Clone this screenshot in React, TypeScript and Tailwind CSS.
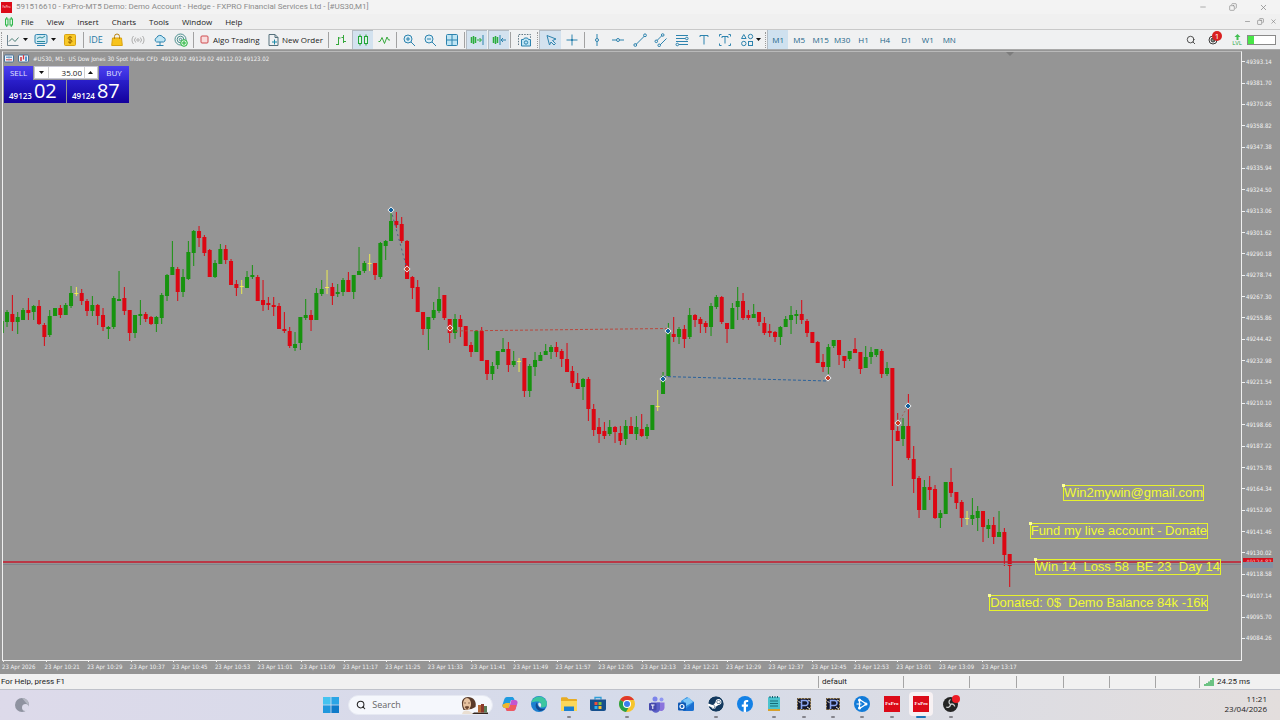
import type { ReactNode } from "react";
import clsx from "clsx";
import { Copy, Minus, Search, X } from "lucide-react";
import { FaFacebookF, FaSteam } from "react-icons/fa";

type Kind = "g" | "r" | "y";
// kind, high, body top, body bottom, low
type Candle = [Kind, number, number, number, number];

const CANDLES: Candle[] = [
  ["g", 321, 321, 333, 333], ["g", 310, 312, 322, 327], ["r", 295, 314, 322, 331], ["g", 312, 317, 322, 334],
  ["g", 308, 310, 320, 320], ["r", 298, 310, 313, 320], ["g", 305, 306, 312, 320], ["r", 300, 306, 324, 325],
  ["r", 323, 325, 337, 346], ["g", 310, 316, 335, 337], ["g", 308, 308, 316, 316], ["r", 305, 308, 315, 318],
  ["g", 303, 305, 315, 315], ["g", 286, 293, 306, 308], ["y", 287, 293, 294, 296], ["r", 289, 293, 301, 305],
  ["r", 299, 301, 311, 316], ["g", 296, 305, 311, 316], ["r", 304, 305, 316, 325], ["r", 308, 315, 327, 331],
  ["g", 326, 327, 329, 339], ["g", 296, 298, 327, 329], ["g", 271, 299, 301, 301], ["r", 287, 298, 311, 315],
  ["r", 310, 310, 333, 341], ["g", 315, 315, 333, 338], ["g", 300, 314, 316, 325], ["r", 312, 314, 319, 322],
  ["r", 316, 317, 324, 325], ["g", 316, 317, 324, 332], ["g", 293, 295, 318, 324], ["g", 274, 275, 296, 301],
  ["g", 241, 267, 275, 275], ["r", 267, 269, 292, 301], ["g", 269, 277, 292, 297], ["g", 241, 252, 279, 280],
  ["g", 230, 231, 253, 266], ["r", 226, 231, 238, 247], ["r", 235, 237, 253, 256], ["r", 249, 250, 277, 277],
  ["g", 260, 263, 277, 278], ["g", 244, 249, 264, 264], ["r", 245, 249, 260, 264], ["r", 259, 261, 285, 285],
  ["r", 280, 284, 288, 296], ["y", 280, 286, 287, 294], ["g", 271, 277, 288, 288], ["g", 265, 275, 277, 279],
  ["r", 275, 277, 301, 301], ["r", 280, 300, 305, 311], ["r", 297, 303, 305, 310], ["r", 297, 305, 307, 316],
  ["r", 303, 306, 329, 329], ["r", 312, 329, 331, 333], ["r", 327, 331, 346, 348], ["g", 332, 344, 348, 351],
  ["g", 317, 317, 343, 350], ["g", 299, 315, 318, 320], ["r", 310, 315, 320, 331], ["g", 288, 293, 320, 320],
  ["g", 280, 289, 294, 296], ["y", 270, 287, 288, 294], ["r", 283, 287, 296, 305], ["g", 284, 292, 294, 297],
  ["g", 278, 280, 292, 296], ["r", 272, 280, 292, 292], ["g", 275, 275, 292, 299], ["g", 247, 271, 275, 275],
  ["g", 261, 263, 271, 273], ["y", 254, 263, 264, 271], ["r", 263, 263, 275, 280], ["g", 242, 243, 277, 279],
  ["g", 240, 241, 246, 260], ["g", 210, 221, 241, 241], ["r", 212, 221, 225, 228], ["r", 217, 224, 241, 243],
  ["r", 240, 241, 279, 279], ["r", 276, 277, 288, 299], ["r", 280, 287, 312, 312], ["r", 312, 312, 329, 335],
  ["g", 317, 317, 329, 350], ["g", 302, 310, 318, 320], ["g", 287, 299, 311, 313], ["r", 295, 295, 318, 320],
  ["r", 319, 319, 333, 343], ["g", 314, 319, 333, 339], ["r", 315, 319, 327, 337], ["r", 326, 326, 346, 346],
  ["r", 342, 345, 352, 357], ["g", 330, 331, 352, 352], ["r", 327, 331, 361, 361], ["r", 360, 360, 374, 380],
  ["g", 362, 366, 374, 380], ["g", 351, 351, 365, 369], ["g", 338, 349, 352, 352], ["r", 342, 349, 365, 372],
  ["g", 351, 361, 365, 367], ["y", 358, 361, 362, 372], ["r", 358, 358, 391, 397], ["g", 364, 366, 391, 397],
  ["g", 352, 360, 367, 376], ["g", 352, 355, 361, 361], ["g", 344, 351, 355, 355], ["g", 345, 347, 352, 359],
  ["r", 342, 347, 352, 357], ["r", 349, 351, 359, 367], ["r", 343, 359, 372, 372], ["r", 366, 371, 383, 387],
  ["r", 373, 383, 389, 389], ["g", 378, 379, 387, 400], ["r", 377, 379, 409, 421], ["r", 404, 409, 430, 436],
  ["r", 418, 427, 434, 443], ["r", 422, 431, 436, 439], ["g", 420, 427, 434, 436], ["r", 426, 427, 432, 443],
  ["r", 426, 433, 441, 445], ["g", 420, 426, 439, 445], ["r", 417, 426, 434, 434], ["g", 416, 427, 434, 440],
  ["r", 414, 429, 436, 437], ["g", 424, 427, 436, 439], ["g", 405, 405, 430, 430], ["y", 390, 406, 407, 411],
  ["g", 372, 376, 394, 394], ["g", 323, 332, 376, 376], ["r", 317, 334, 337, 342], ["g", 327, 329, 337, 344],
  ["r", 325, 329, 339, 348], ["g", 308, 315, 337, 339], ["r", 314, 315, 320, 327], ["r", 317, 319, 324, 333],
  ["r", 321, 323, 327, 333], ["g", 303, 306, 327, 336], ["g", 295, 297, 307, 309], ["r", 296, 297, 322, 324],
  ["r", 323, 323, 329, 343], ["g", 303, 308, 329, 329], ["g", 287, 301, 307, 320], ["r", 293, 301, 318, 320],
  ["r", 310, 315, 318, 320], ["g", 304, 314, 318, 318], ["r", 312, 312, 322, 326], ["r", 317, 323, 333, 335],
  ["r", 324, 331, 333, 337], ["r", 331, 332, 337, 342], ["g", 326, 327, 337, 345], ["g", 316, 319, 327, 327],
  ["g", 306, 315, 320, 334], ["g", 310, 314, 316, 324], ["r", 300, 314, 320, 324], ["r", 319, 321, 333, 337],
  ["r", 332, 332, 343, 343], ["r", 341, 342, 363, 363], ["r", 354, 362, 367, 372], ["g", 344, 347, 367, 374],
  ["g", 340, 340, 346, 348], ["r", 340, 340, 355, 365], ["r", 356, 356, 361, 368], ["g", 351, 351, 359, 361],
  ["r", 338, 349, 353, 353], ["r", 352, 352, 369, 374], ["g", 346, 357, 368, 368], ["g", 347, 352, 357, 364],
  ["g", 349, 349, 355, 357], ["r", 349, 351, 374, 378], ["g", 362, 368, 374, 376], ["r", 368, 368, 430, 486],
  ["r", 413, 431, 441, 441], ["g", 418, 426, 439, 446], ["r", 394, 426, 458, 460], ["r", 446, 459, 479, 493],
  ["r", 476, 478, 510, 518], ["g", 480, 487, 510, 510], ["r", 476, 487, 490, 500], ["r", 485, 489, 518, 519],
  ["g", 510, 513, 518, 528], ["g", 482, 482, 514, 514], ["r", 468, 482, 493, 497], ["r", 492, 492, 503, 509],
  ["r", 500, 502, 518, 527], ["y", 511, 518, 519, 525], ["g", 498, 515, 519, 525], ["g", 506, 511, 518, 531],
  ["r", 511, 511, 527, 542], ["g", 519, 525, 529, 538], ["r", 517, 525, 537, 544], ["g", 511, 532, 537, 537],
  ["r", 528, 532, 555, 566], ["r", 554, 554, 566, 587],
];

const STEP = 16 / 3;
const FILL = { g: "#17930f", r: "#dc0713", y: "#ecec54" };

const DEALS = [
  { x: 391, y: 210, side: "buy" },
  { x: 407, y: 269, side: "sell" },
  { x: 450, y: 328, side: "sell" },
  { x: 668, y: 331, side: "buy" },
  { x: 663, y: 379, side: "buy" },
  { x: 828, y: 378, side: "sell" },
  { x: 908, y: 406, side: "buy" },
  { x: 898, y: 423, side: "sell" },
];

const NOTES = [
  { text: "Win2mywin@gmail.com", pos: "top-[433px] right-[37px]" },
  { text: "Fund my live account - Donate", pos: "top-[471px] right-[33px]" },
  { text: "Win 14  Loss 58  BE 23  Day 14", pos: "top-[507px] right-[20px]" },
  { text: "Donated: 0$  Demo Balance 84k -16k", pos: "top-[543px] right-[33px]" },
];

const PRICES = Array.from({ length: 28 }, (_, i) => (49393.14 - i * 11.44).toFixed(2));

const TIMES = Array.from({ length: 24 }, (_, i) => {
  if (i === 0) return "23 Apr 2026";
  const m = 10 * 60 + 13 + i * 8;
  return `23 Apr ${Math.floor(m / 60)}:${String(m % 60).padStart(2, "0")}`;
});

const MENU = ["File", "View", "Insert", "Charts", "Tools", "Window", "Help"];
const FRAMES = ["M1", "M5", "M15", "M30", "H1", "H4", "D1", "W1", "MN"];

/* ---------- toolbar pieces ---------- */

function Icon({ children, color = "#2d83ae", w = 14 }: { children: ReactNode; color?: string; w?: number }) {
  return (
    <svg width={w} height={14} viewBox={`0 0 ${w} 14`} fill="none" stroke={color} strokeWidth="1" className="shrink-0">
      {children}
    </svg>
  );
}

function Tool({ label, active, children }: { label: string; active?: boolean; children: ReactNode }) {
  return (
    <button
      aria-label={label}
      className={clsx(
        "flex h-full items-center justify-center",
        active && "border-t border-l border-[#b4bcc4] bg-[#d3e2ef]"
      )}
    >
      {children}
    </button>
  );
}

function Caret() {
  return (
    <svg width="5" height="3" viewBox="0 0 5 3" className="shrink-0">
      <path d="M0 0h5L2.5 3z" fill="#111" />
    </svg>
  );
}

const Sep = () => <div className="mx-px h-4 w-px shrink-0 bg-[#a2a2a2]" />;
const Grip = () => <div className="mx-px h-4 w-px shrink-0 border-l border-dotted border-[#9a9a9a]" />;

function Toolbar() {
  return (
    <div className="flex h-5 shrink-0 items-center border-t border-[#c9c9c9] bg-[#f0f1f2]">
      <Grip />
      <button aria-label="Chart types" className="flex h-full w-[28px] items-center justify-center gap-[3px]">
        <Icon color="#6f8592">
          <path d="M1.5 2v10.500h11" />
          <path d="M3 8.500l3-3 3 3 3.500-4" stroke="#4d7f76" />
        </Icon>
        <Caret />
      </button>
      <button aria-label="Indicators" className="flex h-full w-[27px] items-center justify-center gap-[3px]">
        <Icon>
          <rect x="1" y="1.500" width="12" height="9" rx="1.500" fill="#cfe9f3" />
          <path d="M3 5.500l3-1.500 2 1 3-2M3 8.500h8" stroke="#2c8c9a" />
          <path d="M3 12.500h8" />
        </Icon>
        <Caret />
      </button>
      <div className="grid h-full w-6 items-center">
        <Tool label="Market">
          <Icon>
            <rect x="1.500" y="1.500" width="11" height="11" rx="1" fill="#f8c928" stroke="#d9a312" />
            <path d="M9 4.500c-1-1-4-.8-4 .7 0 2 4 1 4 3 0 1.500-3 1.700-4 .6M7 3v8" stroke="#a06b00" />
          </Icon>
        </Tool>
      </div>
      <Sep />
      <div className="grid h-full w-[107px] shrink-0 grid-cols-5 items-center">
        <button className="text-[9px] text-[#2878a5]">IDE</button>
        <Tool label="Store">
          <Icon>
            <path d="M2.500 5h9l.8 7.500H1.700z" fill="#f7c31c" stroke="#d9a312" />
            <path d="M4.500 6V3.500a2.500 2.500 0 0 1 5 0V6" stroke="#ba8413" />
          </Icon>
        </Tool>
        <Tool label="Signals">
          <Icon color="#adadad">
            <circle cx="7" cy="7" r="1.200" />
            <path d="M4.700 4.500a3.500 3.500 0 0 0 0 5M9.300 4.500a3.500 3.500 0 0 1 0 5M2.500 3a6 6 0 0 0 0 8M11.500 3a6 6 0 0 1 0 8" />
          </Icon>
        </Tool>
        <Tool label="Cloud">
          <Icon>
            <path d="M3.500 9A2.300 2.300 0 0 1 3.700 4.700 3.400 3.400 0 0 1 10 4.300 2.400 2.400 0 0 1 10.500 9z" fill="#bfe5f4" />
            <path d="M7 9v3M3.500 12.500h7" />
          </Icon>
        </Tool>
        <Tool label="VPS">
          <Icon color="#4b8f8f">
            <circle cx="6.500" cy="6.500" r="5.500" />
            <circle cx="6.500" cy="6.500" r="3.300" />
            <circle cx="6.500" cy="6.500" r="1.200" />
            <circle cx="10" cy="10" r="3.300" fill="#dff7df" stroke="#25b33c" />
            <path d="M10 8v4M8 10h4" stroke="#25b33c" />
          </Icon>
        </Tool>
      </div>
      <Sep />
      <button className="flex h-full w-[70px] shrink-0 items-center gap-1 pl-[5px] text-[8px] whitespace-nowrap text-[#1c1c1c]">
        <svg width="9" height="9" viewBox="0 0 9 9" className="shrink-0">
          <rect x="1" y="1" width="7" height="7" rx="1" fill="#f8dcdc" stroke="#cf4a4e" />
        </svg>
        Algo Trading
      </button>
      <button className="flex h-full w-[62px] shrink-0 items-center gap-[3px] pl-[3px] text-[8px] whitespace-nowrap text-[#1c1c1c]">
        <Icon w={11}>
          <path d="M1 1.500h6l3 3v8H1zM7 1.500v3h3" stroke="#55707c" />
          <path d="M6.500 6.500v5M4 9h5" stroke="#1c8aa8" />
        </Icon>
        New Order
      </button>
      <Sep />
      <div className="grid h-full w-[65px] shrink-0 grid-cols-3 items-center">
        <Tool label="Bar chart">
          <Icon color="#35a83b">
            <path d="M4.500 4v8M2 11.500h2.500M4.500 5h2M9.500 2v8M7.500 4.500h2M9.500 8.500h2.500" />
          </Icon>
        </Tool>
        <Tool label="Candlesticks" active>
          <Icon color="#22a53a">
            <rect x="2.500" y="3.500" width="3" height="7" fill="#ddf3e4" />
            <rect x="8.500" y="3.500" width="3" height="7" fill="#ddf3e4" />
            <path d="M4 1.500v2M4 10.500v2M10 1.500v2M10 10.500v2" />
          </Icon>
        </Tool>
        <Tool label="Line chart">
          <Icon color="#35a83b">
            <path d="M1.500 8.500h1.500l2-4 2.500 6 2.500-6.500 1.500 3h1.500" />
          </Icon>
        </Tool>
      </div>
      <Sep />
      <div className="grid h-full w-[65px] shrink-0 grid-cols-3 items-center">
        <Tool label="Zoom in">
          <Icon>
            <circle cx="6" cy="6" r="4" fill="#d9edf6" />
            <path d="M9 9l4 4M4 6h4M6 4v4" />
          </Icon>
        </Tool>
        <Tool label="Zoom out">
          <Icon>
            <circle cx="6" cy="6" r="4" fill="#d9edf6" />
            <path d="M9 9l4 4M4 6h4" />
          </Icon>
        </Tool>
        <Tool label="Tile windows">
          <Icon>
            <rect x="1.500" y="1.500" width="11" height="11" rx="1" fill="#bfe5f4" />
            <path d="M7 1.500v11M1.500 7h11" />
          </Icon>
        </Tool>
      </div>
      <Sep />
      <div className="grid h-full w-[43px] shrink-0 grid-cols-2 items-center gap-px">
        <Tool label="Auto scroll" active>
          <Icon color="#29ad3b">
            <path d="M1.500 4v6M3.500 3v8M5.500 4v6" strokeWidth="1.500" />
            <path d="M7 7h4M9.500 5l2 2-2 2" />
            <path d="M13 2v10" stroke="#2d83ae" />
          </Icon>
        </Tool>
        <Tool label="Chart shift" active>
          <Icon color="#29ad3b">
            <path d="M1.500 4v6M3.500 3v8M5.500 4v6" strokeWidth="1.500" />
            <path d="M8 2v10M9 7h5M11 5L9 7l2 2" stroke="#2d83ae" />
          </Icon>
        </Tool>
      </div>
      <Sep />
      <div className="grid h-full w-6 shrink-0 items-center">
        <Tool label="Screenshot">
          <Icon w={15}>
            <path d="M1.500 12V1.500h12V5" strokeDasharray="1.500 1.200" stroke="#5f7784" />
            <path d="M4.500 6.500h2l1-1.500h3l1 1.500h2v6.500h-9z" fill="#bfe5f4" />
            <circle cx="9" cy="9.500" r="1.700" />
          </Icon>
        </Tool>
      </div>
      <Grip />
      <div className="grid h-full w-11 shrink-0 grid-cols-2 items-center">
        <Tool label="Cursor" active>
          <Icon>
            <path d="M3 2.500l9 3.500-3.500 1.500 3 3-1.500 1.500-3-3L5.500 12z" />
          </Icon>
        </Tool>
        <Tool label="Crosshair">
          <Icon>
            <path d="M7 1.500v4.500M7 8v4.500M1.500 7H6M8 7h4.500" />
            <rect x="6.500" y="6.500" width="1" height="1" />
          </Icon>
        </Tool>
      </div>
      <Sep />
      <div className="grid h-full w-[150px] shrink-0 grid-cols-7 items-center">
        <Tool label="Vertical line">
          <Icon>
            <path d="M7 1v4.500M7 8.500V13" />
            <circle cx="7" cy="7" r="1.500" />
          </Icon>
        </Tool>
        <Tool label="Horizontal line">
          <Icon>
            <path d="M1 7h4.500M8.500 7H13" />
            <circle cx="7" cy="7" r="1.500" />
          </Icon>
        </Tool>
        <Tool label="Trend line">
          <Icon>
            <path d="M3 11.500L11.500 3" />
            <circle cx="2.300" cy="12" r="1.400" />
            <circle cx="12" cy="2.300" r="1.400" />
          </Icon>
        </Tool>
        <Tool label="Channel">
          <Icon>
            <path d="M3 7.500L8 2.500M6 12l6.500-6.500" />
            <circle cx="2.300" cy="8.300" r="1.300" />
            <circle cx="8.700" cy="2" r="1.300" />
            <circle cx="5.200" cy="12.300" r="1.300" />
          </Icon>
        </Tool>
        <Tool label="Fibonacci">
          <Icon>
            <path d="M1 2.500h12M1 5.500h9M1 8.500h12M4 11.500h9" />
            <circle cx="11.800" cy="5.500" r="1.300" />
            <circle cx="2.300" cy="11.500" r="1.300" />
          </Icon>
        </Tool>
        <Tool label="Text">
          <Icon>
            <path d="M3 4V2.500h8V4M7 2.500v9" />
          </Icon>
        </Tool>
        <Tool label="Label">
          <Icon>
            <path d="M1.500 3.500v-2h2M10.500 1.500h2v2M12.500 10.500v2h-2M3.500 12.500h-2v-2M4 5V3.500h6V5M7 3.500v7" />
          </Icon>
        </Tool>
      </div>
      <button aria-label="Objects" className="flex h-full w-[28px] shrink-0 items-center justify-center gap-[2px]">
        <Icon>
          <path d="M1.500 5.500l2.300-4 2.300 4z" />
          <circle cx="10.500" cy="3.500" r="2.200" />
          <circle cx="3.800" cy="10.500" r="2.200" />
          <rect x="8.500" y="8.500" width="4" height="4" />
        </Icon>
        <Caret />
      </button>
      <Grip />
      <div className="grid h-full w-[193px] shrink-0 grid-cols-9 items-center text-[8px] text-[#236689]">
        {FRAMES.map((f) => (
          <button key={f} className={clsx("h-full", f === "M1" && "border-l border-[#b4bcc4] bg-[#cfe1ef]")}>
            {f}
          </button>
        ))}
      </div>

      <div className="ml-auto flex items-center gap-3 pr-1">
        <button aria-label="Search">
          <Search size={10} color="#333" />
        </button>
        <button aria-label="Notifications" className="relative">
          <svg width="11" height="11" viewBox="0 0 11 11" fill="none" stroke="#3b3b3b">
            <circle cx="5" cy="6" r="4" />
            <path d="M5 4a2 2 0 1 0 2 2L5 6z" fill="#8d9a8d" />
          </svg>
          <span className="absolute -top-[3px] left-1 h-[10px] w-[10px] rounded-full bg-[#d91f1f] text-center text-[8px] leading-[10px] text-white">1</span>
        </button>
        <div className="flex items-center gap-[5px] pl-px">
          <div className="flex flex-col items-center">
            <svg width="7" height="6" viewBox="0 0 7 6">
              <path d="M3.500 0L6.500 3H4.500v3h-2V3H.5z" fill="#43bf52" />
            </svg>
            <span className="text-[6px] leading-[6px] text-[#23a83a]">LVL</span>
          </div>
          <div className="flex h-[10px] w-[29px] border border-[#8a8a8a] bg-white">
            <div className="w-[6px] bg-[#48e648]" />
          </div>
        </div>
      </div>
    </div>
  );
}

/* ---------- chart ---------- */

function Candles() {
  return (
    <svg viewBox="3 52 1238 608" preserveAspectRatio="xMaxYMin slice" className="block h-[608px] w-full">
      <path d="M1006 52h8l-4 4z" fill="#7c7c7c" />
      {CANDLES.map(([kind, high, top, bottom, low], i) => {
        const x = 1.7 + i * STEP;
        return (
          <g key={i} fill={FILL[kind]}>
            <rect x={x - 0.5} y={high} width={1} height={low - high} />
            <rect x={x - 2} y={top} width={4} height={bottom - top} />
          </g>
        );
      })}
      <g fill="none" strokeWidth="1">
        <path d="M450 331L668 328.500" stroke="#b9483e" strokeDasharray="3 2" />
        <path d="M663 376.500L828 381" stroke="#2b629b" strokeDasharray="3 2" />
        <path d="M391 210L407 269" stroke="#4a5f82" strokeDasharray="2 3" />
        <path d="M898 423L908 406" stroke="#a2615c" strokeDasharray="2 2" />
      </g>
      <path d="M3 564.500h1238" stroke="#80858c" />
      <path d="M3 562h1238" stroke="#c61a2c" strokeWidth="1.300" />
      {DEALS.map((d) => (
        <g key={`${d.x}-${d.y}`}>
          <path d={`M${d.x - 3.5} ${d.y}l3.500-3.500 3.500 3.500-3.500 3.500z`} fill="#e9edf0" />
          <path
            d={`M${d.x - 2} ${d.y}h4M${d.x} ${d.y - 2}v4`}
            stroke={d.side === "buy" ? "#12629c" : "#cf3b26"}
            strokeWidth="2"
          />
        </g>
      ))}
    </svg>
  );
}

function Quote({ pips, big, label }: { pips: string; big: string; label: string }) {
  return (
    <button
      aria-label={label}
      className="flex h-[23px] flex-1 items-end gap-[2px] bg-linear-to-b from-[#2a1fcb] to-[#14009c] pb-[2px] pl-[5px] text-white"
    >
      <span className="text-[8px] leading-[10px] font-semibold">{pips}</span>
      <span className="text-[20px] leading-[20px]">{big}</span>
    </button>
  );
}

function TradePanel() {
  return (
    <div className="w-[125px] font-['Open_Sans','Noto_Sans',sans-serif]">
      <div className="flex h-[14px] text-[8px]">
        <button className="w-[29px] bg-linear-to-b from-[#4c3ff0] to-[#3327d6] text-[#e3e3ff]">SELL</button>
        <div className="mx-px flex h-[13px] flex-1 border border-[#c7c7d2] bg-white">
          <button aria-label="Decrease volume" className="flex w-[14px] items-center justify-center border-r border-[#cfcfcf]">
            <Caret />
          </button>
          <input
            aria-label="Volume"
            defaultValue="35.00"
            className="w-0 flex-1 bg-white pr-[2px] text-right text-[8px] leading-[11px] text-[#222]"
          />
          <button aria-label="Increase volume" className="flex w-[13px] rotate-180 items-center justify-center border-r border-[#cfcfcf]">
            <Caret />
          </button>
        </div>
        <button className="w-[30px] bg-linear-to-b from-[#4c3ff0] to-[#3327d6] text-[#e3e3ff]">BUY</button>
      </div>
      <div className="flex gap-px">
        <Quote label="Sell by market" pips="49123" big="02" />
        <Quote label="Buy by market" pips="49124" big="87" />
      </div>
    </div>
  );
}

function Chart() {
  return (
    <div className="flex-1 bg-[#959595] pt-px pl-[2px] font-['DejaVu_Sans_Condensed','Noto_Sans',sans-serif] text-[6px] text-[#f2f2f2]">
      <div className="flex">
        <div className="relative flex-1 overflow-hidden border border-t-[#b9b9b9] border-r-[#f0f0f0] border-b-[#f0f0f0] border-l-[#f0f0f0]">
          <Candles />
          <div className="absolute top-[2px] left-px flex flex-col gap-[3px]">
            <div className="flex h-[9px] items-center gap-1 whitespace-pre">
              <svg width="25" height="9" viewBox="0 0 25 9">
                <rect x="0.500" y="1" width="9" height="7" rx="1" fill="#f1f4f8" stroke="#4b7396" />
                <path d="M2 3.200h6" stroke="#2f7fc0" />
                <path d="M2 5.800h6" stroke="#d03a42" />
                <path d="M5 1v7" stroke="#8fa3b4" strokeWidth=".6" />
                <rect x="14.500" y="1" width="10" height="7" rx="1" fill="#f1f4f8" stroke="#4b7396" />
                <path d="M17 3v4" stroke="#d03a42" strokeWidth="1.600" />
                <path d="M19.500 1v4.500" stroke="#d03a42" strokeWidth="1.300" />
                <path d="M22 2.500V7" stroke="#2f7fc0" strokeWidth="1.600" />
              </svg>
              <span>#US30, M1:  US Dow Jones 30 Spot Index CFD  49129.02 49129.02 49112.02 49123.02</span>
            </div>
            <TradePanel />
          </div>
          {NOTES.map((n) => (
            <div
              key={n.text}
              className={clsx(
                "absolute border border-[#e6f22c] font-['Liberation_Sans',Arial,sans-serif] text-[13px] leading-[14px] whitespace-pre text-[#f0fb33]",
                n.pos
              )}
            >
              <span className="absolute -top-[2px] -left-[2px] h-[3px] w-[3px] bg-[#fbff9a]" />
              {n.text}
            </div>
          ))}
        </div>
        <div className="relative flex h-[598px] w-[38px] shrink-0 flex-col">
          {PRICES.map((p) => (
            <div key={p} className="flex flex-1 items-center gap-px leading-[8px]">
              <span className="h-px w-[3px] bg-[#f0f0f0]" />
              {p}
            </div>
          ))}
          <div className="absolute top-[507px] left-px h-[10px] w-[30px] bg-[#d30f1c] pl-[3px] leading-[8px] text-[#f7b9bb]">
            49124.87
            <div className="absolute bottom-0 left-0 h-[6px] w-full bg-[#8391a3]" />
          </div>
        </div>
      </div>
      <div className="grid grid-cols-29 pr-[43px]">
        {TIMES.map((t) => (
          <div key={t} className="border-l border-transparent leading-[9px] whitespace-nowrap">
            <div className="h-px w-px bg-[#f0f0f0]" />
            <span className="-ml-px">{t}</span>
          </div>
        ))}
      </div>
    </div>
  );
}

/* ---------- taskbar ---------- */

function Svg({ children }: { children: ReactNode }) {
  return (
    <svg width="18" height="18" viewBox="0 0 18 18" fill="none">
      {children}
    </svg>
  );
}

const FxPro = () => (
  <span className="flex h-4 w-4 items-center justify-center bg-[#dc0a18] font-['Liberation_Serif',serif] text-[5px] font-bold text-white">FxPro</span>
);

const Terminal = () => (
  <Svg>
    <rect x="2" y="3" width="14" height="12" fill="#14172b" />
    <rect x="2.500" y="3.500" width="13" height="11" stroke="#b89e6a" strokeDasharray="2 1" />
    <path d="M6.500 14V5.500h4a2.500 2.500 0 0 1 0 5h-4" stroke="#8aa4ee" strokeWidth="1.600" />
    <path d="M3.500 6l2 2M12 12l3 2M13 5l2 1" stroke="#e8e4da" />
  </Svg>
);

const APPS: { name: string; icon: ReactNode; open?: boolean; active?: boolean }[] = [
  {
    name: "Copilot",
    icon: (
      <Svg>
        <path d="M6 2h5c1 0 1.600.6 2 1.600L13.500 5H10L7.500 13H4c-2 0-3-1.500-2.400-3.500l1.600-5C3.700 3 4.500 2 6 2z" fill="#1f9be0" />
        <path d="M1.600 9.500C1.100 11.500 2 13 4 13h3.500L9 8H5z" fill="#f0b62c" />
        <path d="M12 16H7c-1 0-1.600-.6-2-1.600L4.500 13H8l2.500-8H14c2 0 3 1.500 2.400 3.500l-1.600 5C14.300 15 13.500 16 12 16z" fill="#c455cf" />
        <path d="M12 16H7c-1 0-1.600-.6-2-1.600L4.500 13H8l1-3h6.500l-.7 3.500C14.300 15 13.500 16 12 16z" fill="#ef5a5e" />
      </Svg>
    ),
  },
  {
    name: "Edge",
    icon: (
      <Svg>
        <circle cx="9" cy="9" r="8" fill="#1b7fd0" />
        <path d="M1.200 8A8 8 0 0 1 17 8.500c0 2.500-2 4-4.500 4-1.500 0-2-.7-1.500-1.500.8-1.700 0-4.500-3.500-4.500C4.500 6.500 2 7 1.200 8z" fill="#3cc6a0" />
        <path d="M7 7.500c-2.500 2-1.500 7.500 3.500 8.500a8 8 0 0 0 5-2.500c-4 1.300-8-.5-8.500-6z" fill="#11488f" />
        <path d="M9 7.500c-1.500 1.500-.8 4.300 2.500 5-1-.6-.8-1-.5-1.500.6-1.200.2-3-2-3.500z" fill="#e4ebf3" />
      </Svg>
    ),
  },
  {
    name: "File Explorer",
    open: true,
    icon: (
      <Svg>
        <path d="M1 3.500c0-.8.500-1.300 1.300-1.300h4.500L8.500 4H16c.6 0 1 .4 1 1v10c0 .6-.4 1-1 1H2c-.6 0-1-.4-1-1z" fill="#e8ac23" />
        <path d="M1 6h16v9c0 .6-.4 1-1 1H2c-.6 0-1-.4-1-1z" fill="#fbd75a" />
        <path d="M4 11.500h10V16H4z" fill="#1b7fd0" />
      </Svg>
    ),
  },
  {
    name: "Store",
    icon: (
      <Svg>
        <path d="M6 4.500V2.500h6v2" stroke="#2f9ed8" strokeWidth="1.300" />
        <path d="M1 4.500h16V14a2 2 0 0 1-2 2H3a2 2 0 0 1-2-2z" fill="#17508d" />
        <path d="M5.500 7H8.500v3H5.500z" fill="#f0503a" />
        <path d="M9.500 7h3v3h-3z" fill="#7fc241" />
        <path d="M5.500 11h3v3h-3z" fill="#2eb1ee" />
        <path d="M9.500 11h3v3h-3z" fill="#f9c12d" />
      </Svg>
    ),
  },
  {
    name: "Chrome",
    open: true,
    icon: (
      <Svg>
        <circle cx="9" cy="9" r="8" fill="#f6c52c" />
        <path d="M9 9L2.100 5A8 8 0 0 1 16 5H9z" fill="#e0392d" />
        <path d="M9 9L2.100 5a8 8 0 0 0 5.900 12l3.500-6z" fill="#25a04b" />
        <circle cx="9" cy="9" r="4" fill="#fff" />
        <circle cx="9" cy="9" r="3" fill="#3b7ded" />
      </Svg>
    ),
  },
  {
    name: "Teams",
    icon: (
      <Svg>
        <circle cx="7" cy="4" r="2.500" fill="#7b83eb" />
        <circle cx="13.500" cy="4.500" r="2" fill="#8f96f2" />
        <path d="M9 7.500h7.500V13a3.500 3.500 0 0 1-6 2z" fill="#8b74dd" />
        <path d="M3 7.500h9V13a4 4 0 0 1-8.500 1z" fill="#5b5fc7" />
        <rect x="1" y="8" width="7.500" height="7.500" rx="1" fill="#4548ad" />
        <path d="M3 10h3.500M4.800 10v4" stroke="#fff" />
      </Svg>
    ),
  },
  {
    name: "Outlook",
    icon: (
      <Svg>
        <path d="M4 6l6-4 7 5v7a2 2 0 0 1-2 2H6z" fill="#2f8fe2" />
        <path d="M6 5l6-2.500L16 7l-7 4z" fill="#7cc6f8" />
        <path d="M17 7v7a2 2 0 0 1-2 2H6z" fill="#1b6fd0" />
        <rect x="1" y="7.500" width="8" height="8" rx="1" fill="#0f59b5" />
        <circle cx="5" cy="11.500" r="2" stroke="#fff" strokeWidth="1.200" />
      </Svg>
    ),
  },
  { name: "Steam", open: true, icon: <FaSteam size={16} color="#13395f" className="rounded-full bg-white" /> },
  {
    name: "Facebook",
    icon: (
      <span className="flex h-4 w-4 items-end justify-center rounded-full bg-[#1381e6]">
        <FaFacebookF size={12} color="#fff" />
      </span>
    ),
  },
  {
    name: "Notepad",
    open: true,
    icon: (
      <Svg>
        <rect x="3" y="2" width="12" height="14" rx="1" fill="#4cc3ce" />
        <path d="M3 14h12v2H3z" fill="#d7a02b" />
        <path d="M5 1v2M7.500 1v2M10 1v2M12.500 1v2" stroke="#17606e" />
        <path d="M5 6h8M5 8.500h8M5 11h8" stroke="#156b78" />
      </Svg>
    ),
  },
  { name: "Terminal 1", open: true, icon: <Terminal /> },
  { name: "Terminal 2", open: true, icon: <Terminal /> },
  {
    name: "Streaming",
    open: true,
    icon: (
      <Svg>
        <circle cx="9" cy="9" r="8" fill="#127bd8" />
        <path d="M6.500 4.500v9l7-4.500z" stroke="#fff" strokeWidth="1.300" strokeLinejoin="round" />
        <circle cx="6.500" cy="5" r="1.500" fill="#fff" />
        <circle cx="6.500" cy="13" r="1.500" fill="#fff" />
        <circle cx="13" cy="9" r="1.500" fill="#fff" />
        <path d="M3.500 9h5" stroke="#fff" />
      </Svg>
    ),
  },
  { name: "FxPro 1", open: true, icon: <FxPro /> },
  { name: "FxPro 2", active: true, icon: <FxPro /> },
  {
    name: "OBS Studio",
    open: true,
    icon: (
      <Svg>
        <circle cx="8.500" cy="9.500" r="7.500" fill="#242424" />
        <path d="M8.500 4.500c-2 1-2 4 0 5M8.500 9.500c0 2.200-2.500 3.500-4.300 2.500M8.500 9.500c1.800-1.200 4.200 0 4.200 2" stroke="#cfcfcf" strokeWidth="1.300" />
        <circle cx="14" cy="4" r="4" fill="#ee1c25" />
      </Svg>
    ),
  },
];

function Taskbar() {
  return (
    <div className="flex h-[31px] shrink-0 items-center border-t border-[#bfc2ca] bg-linear-to-r from-[#dddaea] via-[#d5dbea] to-[#e3dedd] pl-[14px]">
      <button aria-label="Widgets">
        <svg width="16" height="16" viewBox="0 0 16 16">
          <circle cx="8" cy="8" r="7" fill="#8f93a0" />
          <circle cx="11.500" cy="10.500" r="3.500" fill="#dcdbea" />
          <path d="M8 1a7 7 0 0 1 7 7l-2-1z" fill="#b4b7c2" />
        </svg>
      </button>
      <div className="flex h-full flex-1 items-center justify-center pb-px pl-[34px]">
        <button aria-label="Start" className="mr-[9px]">
          <svg width="16" height="16" viewBox="0 0 16 16">
            <path d="M0 0h7.600v7.600H0z" fill="#45c3f0" />
            <path d="M8.400 0H16v7.600H8.400z" fill="#2ba5e6" />
            <path d="M0 8.400h7.600V16H0z" fill="#2098dd" />
            <path d="M8.400 8.400H16V16H8.400z" fill="#0f7bc9" />
          </svg>
        </button>
        <label className="mr-[2px] flex h-5 w-[145px] items-center gap-[6px] rounded-full border border-[#e6e9f2] bg-[#f5f7fc] pr-1 pl-[7px]">
          <Search size={10} color="#222" strokeWidth={2.500} />
          <input aria-label="Search" placeholder="Search" className="w-0 flex-1 text-[9px] placeholder:text-[#666]" />
          <svg width="28" height="18" viewBox="0 0 28 18">
            <path d="M8 1C4 1 1.500 4 2 8c0 3 1 4 1.500 6l8-1 4-2C17 5 13 1 8 1z" fill="#593a2a" />
            <ellipse cx="7" cy="8" rx="4" ry="6" fill="#e8c3a0" />
            <path d="M5 11c1-.8 3-.8 4 0l-2 2.500zM4 7h2M8 7h2" fill="#6b4630" stroke="#6b4630" strokeWidth=".7" />
            <path d="M2 18c1-4 4-4 7-3l5 3z" fill="#eadfd2" />
            <path d="M14 16.500h14v1.500H12z" fill="#33251c" />
            <path d="M18 9h3v7.500h-3z" fill="#b56a38" />
            <path d="M21 8h3v8.500h-3z" fill="#8c3a2c" />
            <path d="M24 10h3v6.500h-3z" fill="#5b7c56" />
          </svg>
        </label>
        <div className="grid h-full w-[470px] grid-cols-16">
          {APPS.map((a) => (
            <button key={a.name} aria-label={a.name} className="flex flex-col items-center pt-[2px]">
              <span className={clsx("flex h-6 w-6 items-center justify-center rounded-sm", a.active && "bg-[#f7f1f3]")}>{a.icon}</span>
              {a.open && <span className="h-[2px] w-1 rounded-full bg-[#85858c]" />}
              {a.active && <span className="h-[2px] w-[10px] rounded-full bg-[#1b76b8]" />}
            </button>
          ))}
        </div>
      </div>
      <div className="pr-[13px] pb-[3px] text-right text-[8px] leading-[10px] text-[#222]">
        <p>11:21</p>
        <p>23/04/2026</p>
      </div>
    </div>
  );
}

/* ---------- window ---------- */

export default function App() {
  return (
    <div className="flex min-h-screen flex-col overflow-hidden bg-[#f0f0f0] font-['Open_Sans','Noto_Sans',sans-serif]">
      <div className="flex h-[14px] shrink-0 items-center gap-[4px] bg-[#f3f3f3] pl-px text-[8px] text-[#8b8b8b]">
        <span className="flex h-[11px] w-[11px] items-center justify-center bg-[#dc0a18] text-[3px] text-white">FxPro</span>
        <h1 className="font-['Roboto',sans-serif] leading-[14px]">591516610 - FxPro-MT5 Demo: Demo Account - Hedge - FXPRO Financial Services Ltd - [#US30,M1]</h1>
        <div className="ml-auto flex items-center gap-[22px] pr-[12px] text-[#888]">
          <button aria-label="Minimize"><Minus size={8} /></button>
          <button aria-label="Restore"><Copy size={8} className="-scale-x-100" /></button>
          <button aria-label="Close"><X size={9} /></button>
        </div>
      </div>

      <div className="flex h-[15px] shrink-0 items-center pl-1 text-[8px] text-[#1c1c1c]">
        <svg width="10" height="10" viewBox="0 0 10 10" fill="#d9f5df" stroke="#2fb54a" className="mr-[7px]">
          <rect x="1.500" y="2" width="2.500" height="6" />
          <rect x="6" y="2" width="2.500" height="6" />
          <path d="M2.750 0v2M2.750 8v2M7.250 0v2M7.250 8v2" />
        </svg>
        <nav className="flex gap-[13px]">
          {MENU.map((m) => (
            <button key={m}>{m}</button>
          ))}
        </nav>
        <div className="ml-auto flex items-center gap-[6px] pr-[3px] text-[#777]">
          <button aria-label="Minimize chart"><Minus size={7} /></button>
          <button aria-label="Restore chart"><Copy size={7} className="-scale-x-100" /></button>
          <button aria-label="Close chart"><X size={7} /></button>
        </div>
      </div>

      <Toolbar />
      <div className="h-px shrink-0 bg-[#a8a8a8]" />
      <Chart />

      <div className="flex h-[15px] shrink-0 items-center bg-[#f1f1f1] font-['Roboto',sans-serif] text-[8px] text-[#1c1c1c]">
        <p className="flex-1 pl-px">For Help, press F1</p>
        <p className="w-[85px] border-l border-[#a5a5a5] pl-[3px]">default</p>
        <div className="h-3 w-[66px] border-l border-[#a5a5a5]" />
        <div className="h-3 w-[47px] border-l border-[#a5a5a5]" />
        <div className="h-3 w-[47px] border-l border-[#a5a5a5]" />
        <div className="h-3 w-[46px] border-l border-[#a5a5a5]" />
        <div className="h-3 w-[46px] border-l border-[#a5a5a5]" />
        <div className="h-3 w-[44px] border-l border-[#a5a5a5]" />
        <div className="flex w-[81px] items-center gap-[3px] border-l border-[#a5a5a5] pl-1">
          <svg width="10" height="8" viewBox="0 0 10 8" stroke="#3fb25e" strokeWidth="1.500">
            <path d="M1 8V6M3 8V5M5 8V3.500M7 8V2M9 8V0" />
          </svg>
          24.25 ms
        </div>
      </div>

      <Taskbar />
    </div>
  );
}
